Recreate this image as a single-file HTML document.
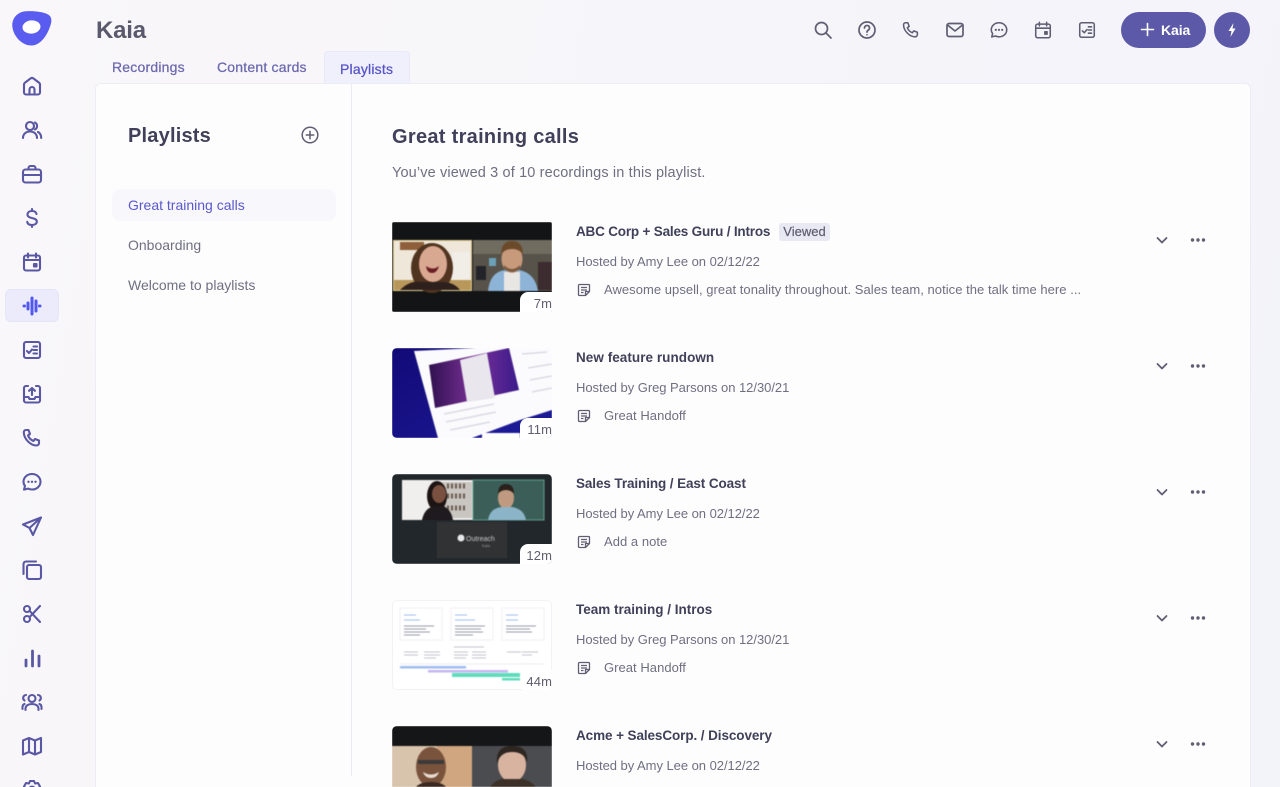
<!DOCTYPE html>
<html lang="en"><head><meta charset="utf-8"><title>Kaia Playlists</title>
<style>
*{box-sizing:border-box}
html,body{margin:0;padding:0;width:1280px;height:787px;overflow:hidden}
body{position:relative;background:linear-gradient(100deg,#f9f7f9 0%,#f6f5f9 50%,#f3f3fa 100%);font-family:"Liberation Sans",sans-serif;color:#3f3f56}
.a{position:absolute;white-space:nowrap}
svg{display:block;overflow:hidden}
.ic{position:absolute;fill:none;stroke-width:2.1;stroke-linecap:round;stroke-linejoin:round}
.s{stroke:#5a58a4;width:22px;height:22px;left:21px}
.t{stroke:#5f5e72;width:20px;height:20px;top:20px;stroke-width:1.7}
.tab{font-size:14px;color:#6b69ae;top:59px;letter-spacing:.2px;-webkit-text-stroke:.25px currentColor}
.h{font-size:13.500px;font-weight:700;color:#40405a;left:576px;line-height:16px}
.m{font-size:13px;color:#6f6f82;left:576px;letter-spacing:-.04px}
.n{font-size:13px;color:#6f6f82;left:604px;letter-spacing:.04px}
.th{position:absolute;left:392px;width:160px;height:90px;border-radius:5px;overflow:hidden}
.th svg{filter:blur(.45px)}
.b{position:absolute;right:0;bottom:0;width:32px;height:20px;background:#fff;border-radius:8px 0 0 0;font-size:13px;color:#5f5f70;text-align:right;line-height:24px;letter-spacing:.1px;overflow:hidden}
.p{font-size:14px;color:#6f6f82;left:128px}
</style></head><body>
<svg width="0" height="0" style="position:absolute"><defs>
<symbol id="note" viewBox="0 0 14 14"><path d="M2.500 1.500h9a1 1 0 0 1 1 1v6l-4 4h-6a1 1 0 0 1-1-1v-9a1 1 0 0 1 1-1zM4 4.500h6M4 7h6M4 9.500h2.500M8.500 12.500V8.500h4" fill="none" stroke="#5f5e72" stroke-width="1.300" stroke-linejoin="round"/></symbol>
<symbol id="chev" viewBox="0 0 14 14"><path d="M2.500 5l4.500 4.500L11.500 5" fill="none" stroke="#5f5e72" stroke-width="1.800" stroke-linecap="round" stroke-linejoin="round"/></symbol>
<symbol id="dots" viewBox="0 0 16 6"><circle cx="2.500" cy="3" r="1.700" fill="#5f5e72"/><circle cx="8" cy="3" r="1.700" fill="#5f5e72"/><circle cx="13.500" cy="3" r="1.700" fill="#5f5e72"/></symbol>
<symbol id="cal" viewBox="0 0 22 22"><rect x="3" y="4.500" width="16" height="15" rx="2"/><path d="M3 9h16M7 2.500v4M15 2.500v4"/><rect x="13" y="13" width="2.500" height="2.500" fill="currentColor"/></symbol>
<symbol id="chk" viewBox="0 0 22 22"><rect x="3" y="3" width="16" height="16" rx="2"/><path d="M12.500 7.500H16M12.500 11H16M12.500 14.500H16M6 12l2 2 3-3.500"/></symbol>
<symbol id="phone" viewBox="0 0 22 22"><path d="M5 3h2.500l1.500 4-2 1.500c1 2.500 3 4.500 5.500 5.500l1.500-2 4 1.500v2.500c0 1.500-1 2.500-2.500 2.500C9.500 18.500 3 12 2.800 5.500 2.800 4 3.600 3 5 3z"/></symbol>
<symbol id="chat" viewBox="0 0 22 22"><path d="M11 3c4.700 0 8.500 3.400 8.500 7.800S15.700 18.500 11 18.500c-1.500 0-2.800-.3-4-.9l-4 1 1-3.600c-1-1.300-1.500-2.700-1.500-4.200C2.500 6.400 6.300 3 11 3z"/><path d="M7.500 10.800h.01M11 10.800h.01M14.500 10.800h.01" stroke-width="2.400"/></symbol>
</defs></svg>

<!-- Logo -->
<svg class="a" style="left:12px;top:11px" width="40" height="35" viewBox="0 0 40 35"><path d="M14 .3C22-.2 31 .8 36 3.500c3.500 2 4 5.500 2.700 10C36 23 29 34.500 19.500 34.500 9.500 34.500 1.500 25 .4 16 -.6 7.500 5.500 .8 14 .3z" fill="#5a5cf0"/><ellipse cx="19.500" cy="16" rx="9" ry="6.600" fill="#fff" transform="rotate(-6 19.500 16)"/></svg>

<!-- Sidebar -->
<div class="a" style="left:5px;top:289px;width:54px;height:33px;background:#ebebfc;border:1px solid #e5e5f8;border-radius:6px"></div>
<svg class="ic s" style="top:75px" viewBox="0 0 22 22"><path d="M3 9.500c0-.8.300-1.400 1-1.900L9.500 3.500c1-.7 2-.7 3 0L18 7.600c.7.500 1 1.100 1 1.900v8a2 2 0 0 1-2 2H5a2 2 0 0 1-2-2zM8.500 19.500v-5a2.500 2.500 0 0 1 5 0v5"/></svg>
<svg class="ic s" style="top:119px" viewBox="0 0 22 22"><circle cx="9" cy="7" r="4"/><path d="M2 19c0-4 3-6.500 7-6.500s7 2.500 7 6.500M14 3.500a4 4 0 0 1 0 7M17 13c2 1 3.200 3 3.200 6"/></svg>
<svg class="ic s" style="top:163px" viewBox="0 0 22 22"><rect x="2" y="6.500" width="18" height="13" rx="2.500"/><path d="M7.500 6.500V5a2 2 0 0 1 2-2h3a2 2 0 0 1 2 2v1.500M2 12h18"/></svg>
<svg class="ic s" style="top:207px" viewBox="0 0 22 22"><path d="M15.500 7c-.4-2-2-3-4.500-3S6.500 5.300 6.500 7.500c0 4.800 9.300 2.500 9.300 7 0 2.200-2 3.500-4.800 3.500s-4.500-1.200-4.800-3.200M11 2v2M11 18v2"/></svg>
<svg class="ic s" style="top:251px;color:#5a58a4" viewBox="0 0 22 22"><use href="#cal"/></svg>
<svg class="a" style="left:21px;top:295px" width="22" height="22" viewBox="0 0 22 22"><g stroke="#5257ef" stroke-width="3" stroke-linecap="round"><path d="M3 11h.5M7 8v6M11 3v16M15 6v10M18.500 11h.5"/></g></svg>
<svg class="ic s" style="top:339px" viewBox="0 0 22 22"><use href="#chk"/></svg>
<svg class="ic s" style="top:383px" viewBox="0 0 22 22"><path d="M7 3H5a2 2 0 0 0-2 2v12.500a2 2 0 0 0 2 2h12a2 2 0 0 0 2-2V5a2 2 0 0 0-2-2h-2M3 14h4.500l1 2h5l1-2H19M11 12V5M8 7.800L11 5l3 2.800"/></svg>
<svg class="ic s" style="top:427px" viewBox="0 0 22 22"><use href="#phone"/></svg>
<svg class="ic s" style="top:471px" viewBox="0 0 22 22"><use href="#chat"/></svg>
<svg class="ic s" style="top:515px" viewBox="0 0 22 22"><path d="M20 2.500L2 9.500l6.500 3.500 3.500 7zM8.500 13L20 2.500"/></svg>
<svg class="ic s" style="top:559px" viewBox="0 0 22 22"><rect x="6" y="6" width="14" height="14" rx="2"/><path d="M2.500 15V5a2.500 2.500 0 0 1 2.500-2.500h10"/></svg>
<svg class="ic s" style="top:603px" viewBox="0 0 22 22"><circle cx="6" cy="6" r="3"/><circle cx="6" cy="16" r="3"/><path d="M8.500 7.800L19 19M8.500 14.200L19 3"/></svg>
<svg class="ic s" style="top:647px" viewBox="0 0 22 22"><path d="M5 13v6M11.500 4v15M18 9v10" stroke-width="2.800"/></svg>
<svg class="ic s" style="top:691px" viewBox="0 0 22 22"><circle cx="11" cy="7.500" r="3.500"/><path d="M4.500 19v-1.500c0-3 3-4.500 6.500-4.500s6.500 1.500 6.500 4.500V19M5 4a3 3 0 0 0-1.500 5.500M17 4a3 3 0 0 1 1.500 5.500M1.500 18v-2c0-1.500.7-2.500 2-3M20.500 18v-2c0-1.500-.7-2.500-2-3"/></svg>
<svg class="ic s" style="top:735px" viewBox="0 0 22 22"><path d="M2 5.500l6-2.500 6 2.500 6-2.500v14l-6 2.500-6-2.500-6 2.500zM8 3v14M14 5.500v14"/></svg>
<svg class="ic s" style="top:779px" viewBox="0 0 22 22"><path d="M9 2h4l1 2.500 3-.5 2 3.500-2 2.500 2 2.500-2 3.500-3-.5-1 2.500H9l-1-2.500-3 .5-2-3.500 2-2.500-2-2.500 2-3.500 3 .5z"/><circle cx="11" cy="10" r="2.500"/></svg>

<!-- Header -->
<div class="a" style="left:96px;top:17px;font-size:24px;font-weight:700;color:#5a5a6c;line-height:28px;letter-spacing:-.2px">Kaia</div>
<div class="a tab" style="left:112px">Recordings</div>
<div class="a tab" style="left:217px">Content cards</div>
<div class="a" style="left:324px;top:51px;width:86px;height:33px;background:#f0f0fd;border:1px solid #e8e8f8;border-bottom:0;border-radius:4px 4px 0 0"></div>
<div class="a tab" style="left:340px;top:61px;color:#5654c8">Playlists</div>

<svg class="ic t" style="left:813px" viewBox="0 0 20 20"><circle cx="8.500" cy="8.500" r="6"/><path d="M13 13l5 5"/></svg>
<svg class="ic t" style="left:857px" viewBox="0 0 20 20"><circle cx="10" cy="10" r="8"/><path d="M7.500 8a2.500 2.500 0 1 1 3.800 2.100c-.9.500-1.300 1-1.300 2M10 14.800h.01"/></svg>
<svg class="ic t" style="left:901px" viewBox="0 0 22 22"><use href="#phone"/></svg>
<svg class="ic t" style="left:945px" viewBox="0 0 20 20"><rect x="2" y="3.500" width="16" height="13" rx="2"/><path d="M2.500 5l7.500 6 7.500-6"/></svg>
<svg class="ic t" style="left:989px" viewBox="0 0 22 22"><use href="#chat"/></svg>
<svg class="ic t" style="left:1033px;color:#5f5e72" viewBox="0 0 22 22"><use href="#cal"/></svg>
<svg class="ic t" style="left:1077px" viewBox="0 0 22 22"><use href="#chk"/></svg>

<div class="a" style="left:1121px;top:12px;width:85px;height:36px;border-radius:18px;background:#5b59a8"></div>
<svg class="a" style="left:1140px;top:22px" width="15" height="15" viewBox="0 0 15 15"><path d="M7.500 1.500v12M1.500 7.500h12" stroke="#fff" stroke-width="1.600" stroke-linecap="round"/></svg>
<div class="a" style="left:1161px;top:22px;font-size:14px;line-height:16px;color:#fff;font-weight:700;letter-spacing:-.1px">Kaia</div>
<div class="a" style="left:1214px;top:12px;width:36px;height:36px;border-radius:50%;background:#5b59a8"></div>
<svg class="a" style="left:1226px;top:22px" width="12" height="16" viewBox="0 0 12 16"><path d="M7.500 1L2.500 9h3L4.500 15l5-8.500h-3z" fill="#fff"/></svg>

<!-- Card -->
<div class="a" style="left:95px;top:83px;width:1156px;height:720px;background:#fefdfd;border:1px solid #eeedf5;border-radius:6px"></div>
<div class="a" style="left:351px;top:84px;width:1px;height:692px;background:#ecebf2"></div>

<!-- Left panel -->
<div class="a" style="left:128px;top:124px;font-size:20px;line-height:24px;font-weight:700;color:#40405a;letter-spacing:.2px">Playlists</div>
<svg class="a" style="left:301px;top:126px;fill:none;stroke:#5f5e72;stroke-width:1.500;stroke-linecap:round" width="18" height="18" viewBox="0 0 18 18"><circle cx="9" cy="9" r="7.800"/><path d="M9 5.300v7.400M5.300 9h7.400"/></svg>
<div class="a" style="left:112px;top:189px;width:224px;height:32px;background:#f8f8fc;border-radius:8px"></div>
<div class="a p" style="top:197px;color:#5a58cc">Great training calls</div>
<div class="a p" style="top:237px">Onboarding</div>
<div class="a p" style="top:277px">Welcome to playlists</div>

<!-- Main -->
<div class="a" style="left:392px;top:125px;font-size:20px;line-height:24px;font-weight:700;color:#40405a;letter-spacing:.3px">Great training calls</div>
<div class="a" style="left:392px;top:165px;font-size:14.500px;color:#6f6f82;letter-spacing:.14px">You’ve viewed 3 of 10 recordings in this playlist.</div>

<!-- Row 1 -->
<div class="th" style="top:222px;border-radius:2px"><svg width="160" height="90" viewBox="0 0 160 90">
<rect width="160" height="90" fill="#131415"/>
<rect x="1" y="18" width="79" height="51" fill="#dcc98f"/><rect x="2" y="19" width="77" height="49" fill="#eee7da"/><rect x="8" y="20" width="24" height="8" fill="#8e5f3a"/><rect x="60" y="30" width="18" height="30" fill="#f1eee8"/><rect x="2" y="58" width="77" height="10" fill="#b8985a"/>
<ellipse cx="40" cy="46" rx="21" ry="25" fill="#50341f"/><ellipse cx="41" cy="42" rx="14" ry="18" fill="#d9a890"/><path d="M34 44q7 5 13 0q-2 7-7 7t-6-7z" fill="#6b1f25"/><path d="M8 68q10-10 22-8h20q12 0 18 8z" fill="#2e211d"/>
<rect x="81" y="18" width="79" height="51" fill="#57534a"/><rect x="81" y="18" width="79" height="14" fill="#706c60"/><rect x="97" y="36" width="7" height="8" fill="#6aa0b8"/><rect x="84" y="44" width="10" height="14" fill="#22242a"/><rect x="146" y="40" width="14" height="28" fill="#3c2c30"/><path d="M96 69q2-19 17-21h14q16 3 19 21z" fill="#8db4d6"/><path d="M112 50h16v19h-16z" fill="#e9e7e4"/><ellipse cx="120" cy="37" rx="10.500" ry="14" fill="#c79a7c"/><path d="M109 33q0-14 11-14t11 14q-3-6-11-6t-11 6z" fill="#6b4a2a"/><path d="M112 43q8 8 16 0v4q-8 6-16 0z" fill="#7c5a40"/>
</svg><div class="b">7m</div></div>

<!-- Row 2 -->
<div class="th" style="top:348px"><svg width="160" height="90" viewBox="0 0 160 90">
<defs><linearGradient id="g1" x1="0" y1="0" x2="1" y2="1"><stop offset="0" stop-color="#120a78"/><stop offset="1" stop-color="#1d1a96"/></linearGradient><linearGradient id="g2" x1="0" x2="1"><stop offset="0" stop-color="#301050"/><stop offset=".5" stop-color="#7a3198"/><stop offset="1" stop-color="#3a1a8a"/></linearGradient></defs>
<rect width="160" height="90" fill="url(#g1)"/>
<path d="M22 3L125 -2h35v64L80 90H46z" fill="#fbfbfd"/>
<path d="M37 17L117 0l10 42-84 18z" fill="url(#g2)"/>
<path d="M68 12L95 5l8 45-28 4z" fill="#e9e6ee"/>
<path d="M130 6l25-2M136 20l24-4M138 32l22-4M140 44l20-4M52 66l50-10M54 74l50-10M58 82l40-8" stroke="#d4d5e0" stroke-width="1.200"/>
<path d="M80 90l48-18 32-10v28z" fill="#1d1a96"/><rect x="90" y="85" width="38" height="6" fill="#fff"/>
</svg><div class="b">11m</div></div>

<!-- Row 3 -->
<div class="th" style="top:474px"><svg width="160" height="90" viewBox="0 0 160 90">
<rect width="160" height="90" fill="#22272c"/>
<rect x="10" y="6" width="71" height="40" fill="#f0efee"/><rect x="50" y="8" width="30" height="36" fill="#c9c5c0"/><path d="M55 12h18M55 22h18M55 34h18" stroke="#6a5a50" stroke-width="5" stroke-dasharray="2 2"/>
<ellipse cx="45" cy="22" rx="10" ry="15" fill="#1c1412"/><ellipse cx="47" cy="20" rx="7" ry="9" fill="#7a5040"/><path d="M30 46q3-14 15-14h6q8 3 10 14z" fill="#1e1a1e"/>
<rect x="81" y="6" width="71" height="40" fill="#3b5f58"/><rect x="81" y="6" width="71" height="40" fill="none" stroke="#5c9c8a"/><ellipse cx="114" cy="24" rx="8" ry="11" fill="#c09a80"/><path d="M106 20q0-10 8-10t8 10q-3-4-8-4t-8 4z" fill="#2a211c"/><path d="M96 46q2-12 14-13h10q12 2 14 13z" fill="#8bb4c8"/>
<rect x="45" y="48" width="70" height="36" fill="#313233"/><circle cx="69" cy="64" r="3.500" fill="#e8e8e8"/><text x="74" y="67" font-size="7" fill="#c8c8c8" font-family="Liberation Sans">Outreach</text><text x="90" y="73" font-size="4" fill="#999" font-family="Liberation Sans">Kaia</text>
</svg><div class="b">12m</div></div>

<!-- Row 4 -->
<div class="th" style="top:600px;background:#fff;box-shadow:inset 0 0 0 1px #f2f2f6"><svg width="160" height="90" viewBox="0 0 160 90">
<g fill="#fff" stroke="#f0f0f5"><rect x="8" y="8" width="42" height="32"/><rect x="59" y="8" width="42" height="32"/><rect x="110" y="8" width="42" height="32"/></g>
<g stroke-width="1"><path d="M12 15h12M12 20h16M63 15h12M63 20h20M114 15h12M114 20h12" stroke="#9cbcf0"/><path d="M12 26h30M12 29h22M12 32h26M12 35h16M63 26h30M63 29h26M63 32h28M63 35h18M114 26h30M114 29h24M114 32h26" stroke="#9a9aaa"/><path d="M8 64h144" stroke="#ececf2"/><path d="M12 52h14M12 55h14M32 52h16M32 55h16M32 58h12M62 47h30M62 52h14M62 55h14M62 58h12M80 52h14M80 55h14M80 58h14M115 52h14M130 52h16M130 55h10" stroke="#c2c2ce"/></g>
<rect x="8" y="66" width="66" height="2.500" fill="#9fbdf0"/><rect x="36" y="70" width="80" height="2.500" fill="#c6b6f3"/><rect x="60" y="73" width="68" height="4" fill="#5fdcbc"/><rect x="110" y="78" width="18" height="2.500" fill="#5fdcbc"/>
</svg><div class="b" style="width:30px;background:#fff">44m</div></div>

<!-- Row 5 -->
<div class="th" style="top:726px;height:61px;border-radius:5px 5px 0 0"><svg width="160" height="61" viewBox="0 0 160 61">
<rect width="160" height="61" fill="#141618"/>
<rect y="20" width="80" height="41" fill="#d8c3ad"/><rect x="45" y="20" width="35" height="41" fill="#cfa680"/>
<rect x="80" y="20" width="80" height="41" fill="#4b4c50"/>
<ellipse cx="39" cy="41" rx="15" ry="20" fill="#7a533c"/><path d="M26 34h26v4H26z" fill="#3a3a3a"/><path d="M31 46q8 5 16 0q-2 6-8 6t-8-6z" fill="#e8dcd0"/><path d="M24 61q4-5 15-5t15 5z" fill="#3a2a22"/>
<ellipse cx="120" cy="39" rx="14" ry="17" fill="#d8b4a0"/><path d="M105 38q-2-18 15-18t15 16q-3-10-15-10t-15 12z" fill="#2e2620"/><path d="M98 61q6-8 14-8h18q8 1 14 8z" fill="#3c3028"/>
</svg></div>

<!-- Row text -->
<div class="a h" style="top:224px;letter-spacing:-.19px">ABC Corp + Sales Guru / Intros</div>
<div class="a" style="left:779px;top:223px;width:51px;height:18px;background:#e9e9f3;border-radius:3px;font-size:13px;line-height:18px;color:#5f5e72;text-align:center;-webkit-text-stroke:.2px #5f5e72">Viewed</div>
<div class="a m" style="top:254px">Hosted by Amy Lee on 02/12/22</div>
<svg class="a" style="left:577px;top:283px" width="14" height="14"><use href="#note"/></svg>
<div class="a n" style="top:282px">Awesome upsell, great tonality throughout. Sales team, notice the talk time here ...</div>

<div class="a h" style="top:350px;letter-spacing:.05px">New feature rundown</div>
<div class="a m" style="top:380px">Hosted by Greg Parsons on 12/30/21</div>
<svg class="a" style="left:577px;top:409px" width="14" height="14"><use href="#note"/></svg>
<div class="a n" style="top:408px">Great Handoff</div>

<div class="a h" style="top:476px;letter-spacing:-.1px">Sales Training / East Coast</div>
<div class="a m" style="top:506px">Hosted by Amy Lee on 02/12/22</div>
<svg class="a" style="left:577px;top:535px" width="14" height="14"><use href="#note"/></svg>
<div class="a n" style="top:534px">Add a note</div>

<div class="a h" style="top:602px">Team training / Intros</div>
<div class="a m" style="top:632px">Hosted by Greg Parsons on 12/30/21</div>
<svg class="a" style="left:577px;top:661px" width="14" height="14"><use href="#note"/></svg>
<div class="a n" style="top:660px">Great Handoff</div>

<div class="a h" style="top:728px;letter-spacing:-.09px">Acme + SalesCorp. / Discovery</div>
<div class="a m" style="top:758px">Hosted by Amy Lee on 02/12/22</div>

<!-- Row actions -->
<svg class="a" style="left:1155px;top:233px" width="14" height="14"><use href="#chev"/></svg><svg class="a" style="left:1190px;top:237px" width="16" height="6"><use href="#dots"/></svg>
<svg class="a" style="left:1155px;top:359px" width="14" height="14"><use href="#chev"/></svg><svg class="a" style="left:1190px;top:363px" width="16" height="6"><use href="#dots"/></svg>
<svg class="a" style="left:1155px;top:485px" width="14" height="14"><use href="#chev"/></svg><svg class="a" style="left:1190px;top:489px" width="16" height="6"><use href="#dots"/></svg>
<svg class="a" style="left:1155px;top:611px" width="14" height="14"><use href="#chev"/></svg><svg class="a" style="left:1190px;top:615px" width="16" height="6"><use href="#dots"/></svg>
<svg class="a" style="left:1155px;top:737px" width="14" height="14"><use href="#chev"/></svg><svg class="a" style="left:1190px;top:741px" width="16" height="6"><use href="#dots"/></svg>
</body></html>
